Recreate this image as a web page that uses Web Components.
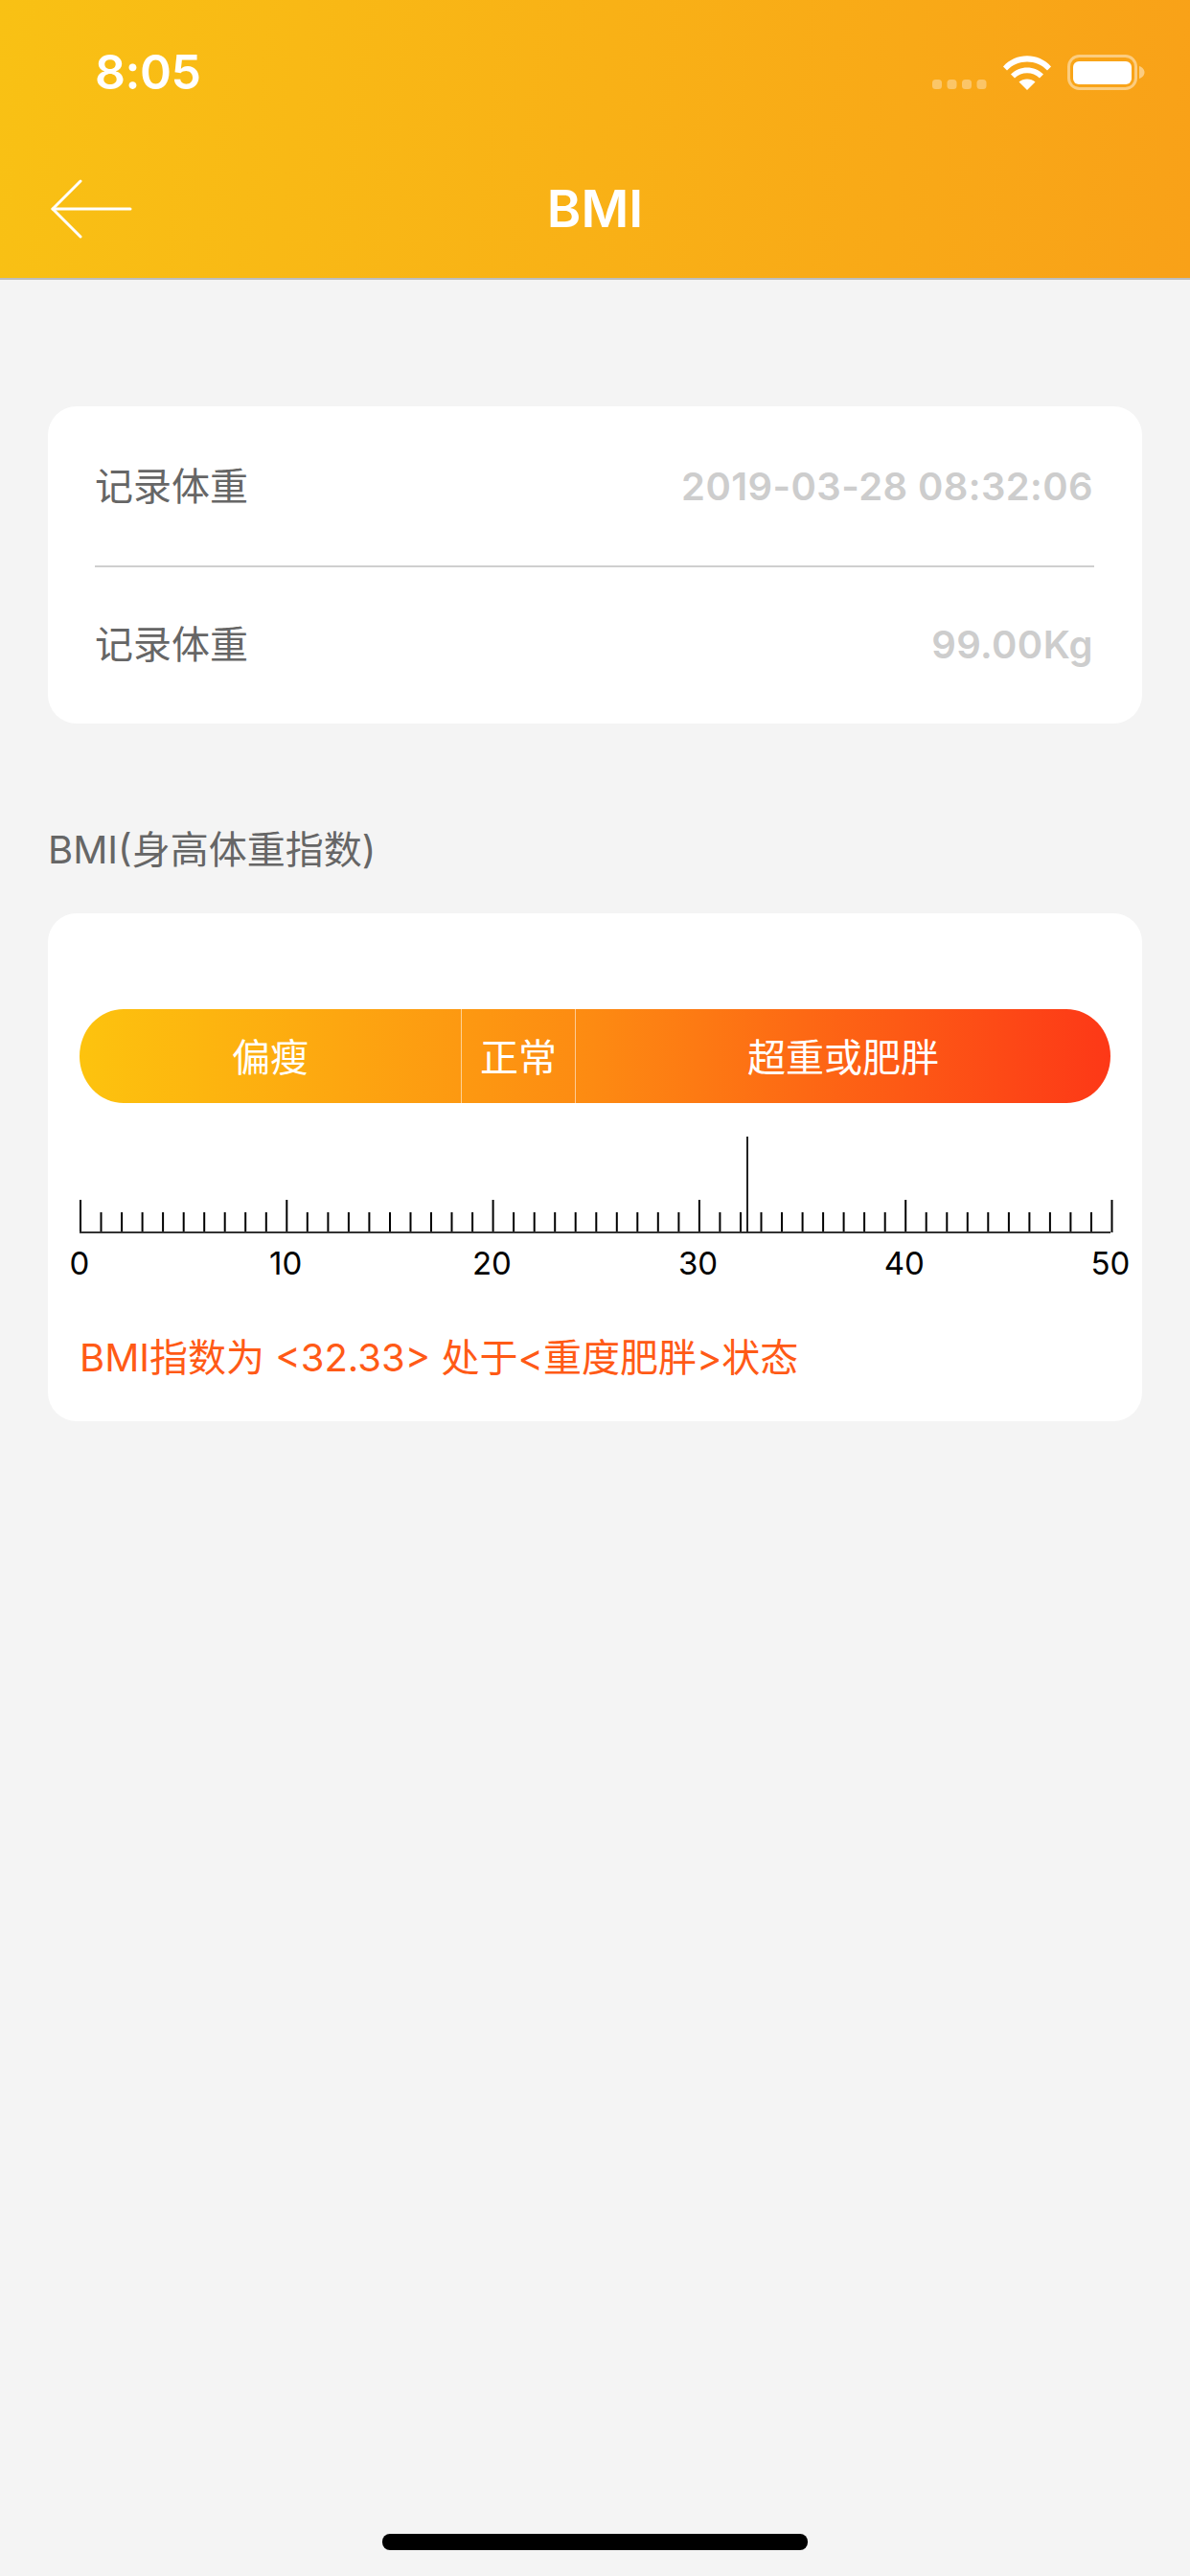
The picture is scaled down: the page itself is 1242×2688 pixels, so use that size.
<!DOCTYPE html>
<html lang="zh">
<head>
<meta charset="utf-8">
<title>BMI</title>
<style>
  html, body { margin: 0; padding: 0; }
  body {
    width: 1242px;
    height: 2688px;
    background: #f4f4f4;
    font-family: Inter, "Noto Sans CJK SC", sans-serif;
    overflow: hidden;
  }
  #page { display: flex; flex-direction: column; height: 2688px; }
</style>
</head>
<body>
<div id="page">
  <app-header title="BMI" time="8:05"></app-header>
  <info-card>
    <info-row label="记录体重" value="2019-03-28 08:32:06"></info-row>
    <info-row label="记录体重" value="99.00Kg"></info-row>
  </info-card>
  <section-title>BMI(身高体重指数)</section-title>
  <bmi-card value="32.33" message="BMI指数为 &lt;32.33&gt; 处于&lt;重度肥胖&gt;状态"></bmi-card>
  <home-indicator></home-indicator>
</div>

<script>
class AppHeader extends HTMLElement {
  constructor() {
    super();
    this.attachShadow({ mode: "open" });
  }

  connectedCallback() {
    const title = this.getAttribute("title") || "";
    const time = this.getAttribute("time") || "";
    this.shadowRoot.innerHTML = `
      <style>
        :host {
          display: block;
          height: 290px;
          background: linear-gradient(97deg, #f9c114 0%, #f9a118 100%);
          border-bottom: 2px solid #bdbdbd;
          color: #fff;
        }
        .status {
          height: 145px;
          box-sizing: border-box;
          padding: 57px 47px 0 99px;
          display: flex;
          justify-content: space-between;
          align-items: flex-start;
        }
        .time { font-size: 50px; line-height: 37px; font-weight: 600; letter-spacing: -.5px; }
        .icons { display: block; }
        .nav {
          height: 145px;
          padding-left: 53px;
          display: grid;
          grid-template-columns: 85px 1fr 138px;
          align-items: center;
        }
        .back { display: block; }
        .title { text-align: center; font-size: 54px; font-weight: 600; line-height: 60px; margin-top: 1px; }
      </style>
      <div class="status">
        <span class="time">${time}</span>
        <svg class="icons" width="222" height="37" viewBox="0 0 222 37" fill="#fff">
          <g opacity=".35">
            <rect x="0" y="26" width="10" height="10" rx="3.5"/>
            <rect x="15.5" y="26" width="10" height="10" rx="3.5"/>
            <rect x="31" y="26" width="10" height="10" rx="3.5"/>
            <rect x="46.5" y="26" width="10" height="10" rx="3.5"/>
          </g>
          <path d="M74 12.5C87 -2.5 111 -2.5 124 12.5L120 16.5C109 4.500 89 4.500 78 16.500Z"/>
          <path d="M82 20.500C91 11 107 11 116 20.500L112 24.500C105 17.500 93 17.500 86 24.500Z"/>
          <path d="M90.500 28.500C95 24.500 103 24.500 107.500 28.500L99 37Z"/>
          <rect x="142.500" y="1.500" width="70" height="34" rx="11" fill="none" stroke="#fff" stroke-opacity=".45" stroke-width="3"/>
          <rect x="147" y="7" width="61" height="24" rx="6"/>
          <path d="M216 12C220 13.500 221.500 16 221.500 18.500C221.500 21 220 23.500 216 25Z" opacity=".45"/>
        </svg>
      </div>
      <div class="nav">
        <svg class="back" width="85" height="62" viewBox="0 0 85 62" fill="none" stroke="#fff" stroke-width="3" stroke-linecap="round" stroke-linejoin="round">
          <path d="M31 2L2 31L31 60"/>
          <path d="M2 31H83"/>
        </svg>
        <span class="title">${title}</span>
        <span></span>
      </div>`;
  }
}

class InfoCard extends HTMLElement {
  constructor() {
    super();
    this.attachShadow({ mode: "open" });
  }

  connectedCallback() {
    this.shadowRoot.innerHTML = `
      <style>
        :host {
          display: block;
          margin: 132px 50px 0;
          padding: 0 50px 0 49px;
          background: #fff;
          border-radius: 30px;
        }
        ::slotted(info-row:first-child) { border-bottom: 2px solid #cfcfcf; height: 168px; padding-bottom: 0; }
      </style>
      <slot></slot>`;
  }
}

class InfoRow extends HTMLElement {
  constructor() {
    super();
    this.attachShadow({ mode: "open" });
  }

  connectedCallback() {
    const label = this.getAttribute("label") || "";
    const value = this.getAttribute("value") || "";
    this.shadowRoot.innerHTML = `
      <style>
        :host {
          display: flex;
          box-sizing: border-box;
          height: 163px;
          padding-bottom: 2px;
          align-items: center;
          justify-content: space-between;
        }
        .label { font-size: 40px; color: #666; margin-bottom: 5px; }
        .value {
          font-size: 40px;
          font-weight: 600;
          letter-spacing: .4px;
          color: #cdcdcd;
          padding-right: 1px;
        }
      </style>
      <span class="label">${label}</span>
      <span class="value">${value}</span>`;
  }
}

class SectionTitle extends HTMLElement {
  constructor() {
    super();
    this.attachShadow({ mode: "open" });
  }

  connectedCallback() {
    this.shadowRoot.innerHTML = `
      <style>
        :host {
          display: block;
          margin: 112px 50px 46px;
          font-size: 40px;
          line-height: 40px;
          color: #666;
        }
      </style>
      <slot></slot>`;
  }
}

class BmiBar extends HTMLElement {
  constructor() {
    super();
    this.attachShadow({ mode: "open" });
  }

  connectedCallback() {
    this.shadowRoot.innerHTML = `
      <style>
        :host {
          display: grid;
          grid-template-columns: 398px 119px 1fr;
          height: 98px;
          border-radius: 46px / 49px;
          overflow: hidden;
          background: linear-gradient(90deg, #fdc30e 0%, #fd8a12 50%, #fd3817 100%);
          color: #fff;
          font-size: 40px;
        }
        span { display: flex; align-items: center; justify-content: center; padding-bottom: 3px; }
        span + span { border-left: 1.5px solid rgba(255, 255, 255, .55); }
      </style>
      <span>偏瘦</span><span>正常</span><span>超重或肥胖</span>`;
  }
}

class BmiRuler extends HTMLElement {
  constructor() {
    super();
    this.attachShadow({ mode: "open" });
  }

  connectedCallback() {
    const value = parseFloat(this.getAttribute("value")) || 0;
    const step = 21.53; // largeur d'une unité sur la règle
    let ticks = "";
    for (let i = 0; i <= 50; i++) {
      const x = (1 + i * step).toFixed(1);
      const top = i % 10 === 0 ? 66 : 79;
      ticks += `<path d="M${x} ${top}V100"/>`;
    }
    const markerX = (1 + value * step).toFixed(0);
    let labels = "";
    for (let n = 0; n <= 50; n += 10) {
      labels += `<span>${n}</span>`;
    }
    this.shadowRoot.innerHTML = `
      <style>
        :host { display: block; margin-top: 35px; }
        svg { display: block; overflow: visible; }
        .labels {
          display: flex;
          justify-content: space-between;
          width: 1076px;
          margin-top: 11px;
          font-size: 33px;
          line-height: 40px;
          color: #000;
        }
        .labels span { width: 0; display: flex; justify-content: center; white-space: nowrap; }
      </style>
      <svg width="1080" height="101" viewBox="0 0 1080 101" fill="none" stroke="#000" stroke-width="2">
        ${ticks}
        <path d="M0 100H1076" stroke="#333"/>
        <path d="M${markerX} 0V100" stroke="#222"/>
      </svg>
      <div class="labels">${labels}</div>`;
  }
}

class BmiCard extends HTMLElement {
  constructor() {
    super();
    this.attachShadow({ mode: "open" });
  }

  connectedCallback() {
    const value = this.getAttribute("value") || "0";
    const message = (this.getAttribute("message") || "").replace(/</g, "&lt;");
    this.shadowRoot.innerHTML = `
      <style>
        :host {
          display: block;
          margin: 0 50px;
          padding: 100px 33px 41px;
          background: #fff;
          border-radius: 30px;
        }
        .message {
          margin-top: 54px;
          font-size: 40px;
          line-height: 50px;
          color: #ff5a16;
          white-space: nowrap;
        }
      </style>
      <bmi-bar></bmi-bar>
      <bmi-ruler value="${value}"></bmi-ruler>
      <div class="message">${message}</div>`;
  }
}

class HomeIndicator extends HTMLElement {
  constructor() {
    super();
    this.attachShadow({ mode: "open" });
  }

  connectedCallback() {
    this.shadowRoot.innerHTML = `
      <style>
        :host {
          display: block;
          width: 444px;
          height: 17px;
          margin: auto auto 27px;
          background: #000;
          border-radius: 8px;
        }
      </style>`;
  }
}

customElements.define("app-header", AppHeader);
customElements.define("info-card", InfoCard);
customElements.define("info-row", InfoRow);
customElements.define("section-title", SectionTitle);
customElements.define("bmi-bar", BmiBar);
customElements.define("bmi-ruler", BmiRuler);
customElements.define("bmi-card", BmiCard);
customElements.define("home-indicator", HomeIndicator);
</script>
</body>
</html>
